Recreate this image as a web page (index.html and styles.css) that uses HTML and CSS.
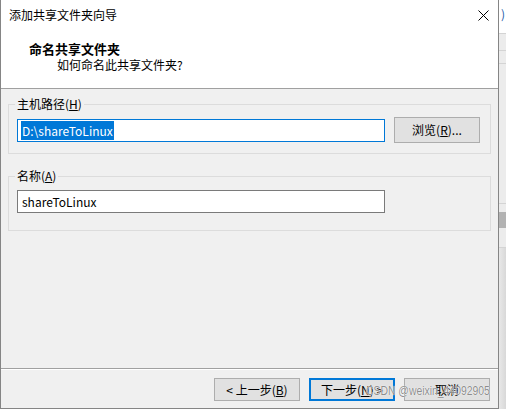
FILE: index.html
```html
<!DOCTYPE html>
<html lang="zh-CN">
<head>
  <meta charset="UTF-8">
  <title>添加共享文件夹向导</title>
  <link rel="stylesheet" href="styles.css">
</head>
<body>
  <div class="screen">
    <div class="dialog">
      <div class="head">
        <div class="titlebar">
          <span class="title">添加共享文件夹向导</span>
          <svg class="close" width="11" height="11" viewBox="0 0 11 11">
            <path d="M0.5 0.5L10.5 10.5M10.5 0.5L0.5 10.5" stroke="#000" stroke-width="1" fill="none"/>
          </svg>
        </div>
        <div class="banner">
          <div class="banner-title">命名共享文件夹</div>
          <div class="banner-sub">如何命名此共享文件夹?</div>
        </div>
      </div>

      <div class="content">
        <fieldset class="group group-path">
          <legend>主机路径(<u>H</u>)</legend>
          <div class="row">
            <div class="field focused"><span class="sel">D:\shareToLinux</span></div>
            <button class="btn browse">浏览(<u>R</u>)...</button>
          </div>
        </fieldset>

        <fieldset class="group group-name">
          <legend>名称(<u>A</u>)</legend>
          <div class="row">
            <div class="field">shareToLinux</div>
          </div>
        </fieldset>
      </div>

      <div class="footer">
        <button class="btn">&lt; 上一步(<u>B</u>)</button>
        <button class="btn default">下一步(<u>N</u>) &gt;</button>
        <button class="btn">取消</button>
      </div>

      <div class="watermark">CSDN @weixin_44092905</div>
    </div>

    <div class="backdrop">
      <div class="bd-top">)</div>
      <div class="bd-band bd-a"></div>
      <div class="bd-band bd-b"></div>
      <div class="bd-band bd-c"></div>
      <div class="bd-gap"></div>
      <div class="bd-dark"></div>
      <div class="bd-band bd-d"></div>
      <div class="bd-rest"></div>
    </div>
  </div>
</body>
</html>
```

FILE: styles.css
```css
* {
  box-sizing: border-box;
}

body {
  margin: 0;
  font: 12px/16px "Noto Sans CJK SC", sans-serif;
  color: #000;
  background: #f0f0f0;
}

.screen {
  display: flex;
  width: 506px;
  height: 409px;
  overflow: hidden;
}

.dialog {
  position: relative;
  display: flex;
  flex-direction: column;
  flex: none;
  width: 499px;
  height: 409px;
  background: #f0f0f0;
  border: 1px solid #858585;
  border-top: none;
}

/* white header: title bar + banner */
.head {
  height: 89px;
  background: #fff;
  border-bottom: 1px solid #a0a0a0;
}

.titlebar {
  display: flex;
  align-items: center;
  justify-content: space-between;
  height: 30px;
  padding: 0 9px 0 8px;
}

.banner {
  padding: 10px 0 0 28px;
}

.banner-title {
  font-weight: bold;
  font-size: 13px;
  line-height: 17px;
}

.banner-sub {
  padding-left: 28px;
}

/* group boxes */
.content {
  flex: 1;
  padding: 7px 7px 0;
}

.group {
  margin: 0;
  min-width: 0;
  padding: 5px 8px 10px;
  border: 1px solid #dcdcdc;
}

.group legend {
  padding: 0 2px;
  margin-left: -2px;
  line-height: 16px;
}

.group-name {
  margin-top: 14px;
  padding-top: 6px;
  padding-bottom: 17px;
}

.row {
  display: flex;
  align-items: center;
  gap: 9px;
}

.field {
  width: 368px;
  height: 23px;
  padding: 0 4px;
  border: 1px solid #7a7a7a;
  background: #fff;
  line-height: 21px;
  white-space: nowrap;
}

.field.focused {
  border-color: #0078d7;
}

.sel {
  margin-left: -1px;
  padding: 1px 1px;
  background: #0078d7;
  color: #fff;
}

u {
  text-underline-offset: 1px;
}

/* buttons */
.btn {
  width: 86px;
  height: 23px;
  padding: 0;
  border: 1px solid #adadad;
  background: #e1e1e1;
  font: inherit;
  line-height: 16px;
  color: #000;
}

.browse {
  height: 26px;
}

.default {
  border: 2px solid #0078d7;
}

.footer {
  display: flex;
  justify-content: flex-end;
  gap: 9px;
  height: 40px;
  padding: 9px 8px 0 0;
  border-top: 1px solid #a0a0a0;
  box-shadow: inset 0 1px #fff;
}

.watermark {
  position: absolute;
  right: 8px;
  bottom: 9px;
  font: 13px/16px "Liberation Sans", Arial, sans-serif;
  color: rgba(110, 110, 110, 0.8);
  text-shadow: 0 0 1px #fff, 0 0 1px #fff;
  transform: scaleX(0.8);
  transform-origin: right center;
  white-space: nowrap;
}

/* window behind the dialog */
.backdrop {
  display: flex;
  flex-direction: column;
  width: 7px;
  background: #ececec;
}

.bd-top {
  height: 34px;
  padding: 6px 0 0 2px;
  background: #fff;
  border-bottom: 1px solid #d4d4d4;
  color: #1e5aa8;
  overflow: hidden;
}

.bd-band {
  border-bottom: 1px solid #d4d4d4;
}

.bd-a {
  height: 17px;
}

.bd-b {
  height: 13px;
}

.bd-c {
  height: 140px;
}

.bd-gap {
  height: 8px;
}

.bd-dark {
  height: 16px;
  background: #b2b2b2;
}

.bd-d {
  height: 20px;
}

.bd-rest {
  flex: 1;
  background: linear-gradient(to right, #e8e8e8, #d8d8d8);
}
```
